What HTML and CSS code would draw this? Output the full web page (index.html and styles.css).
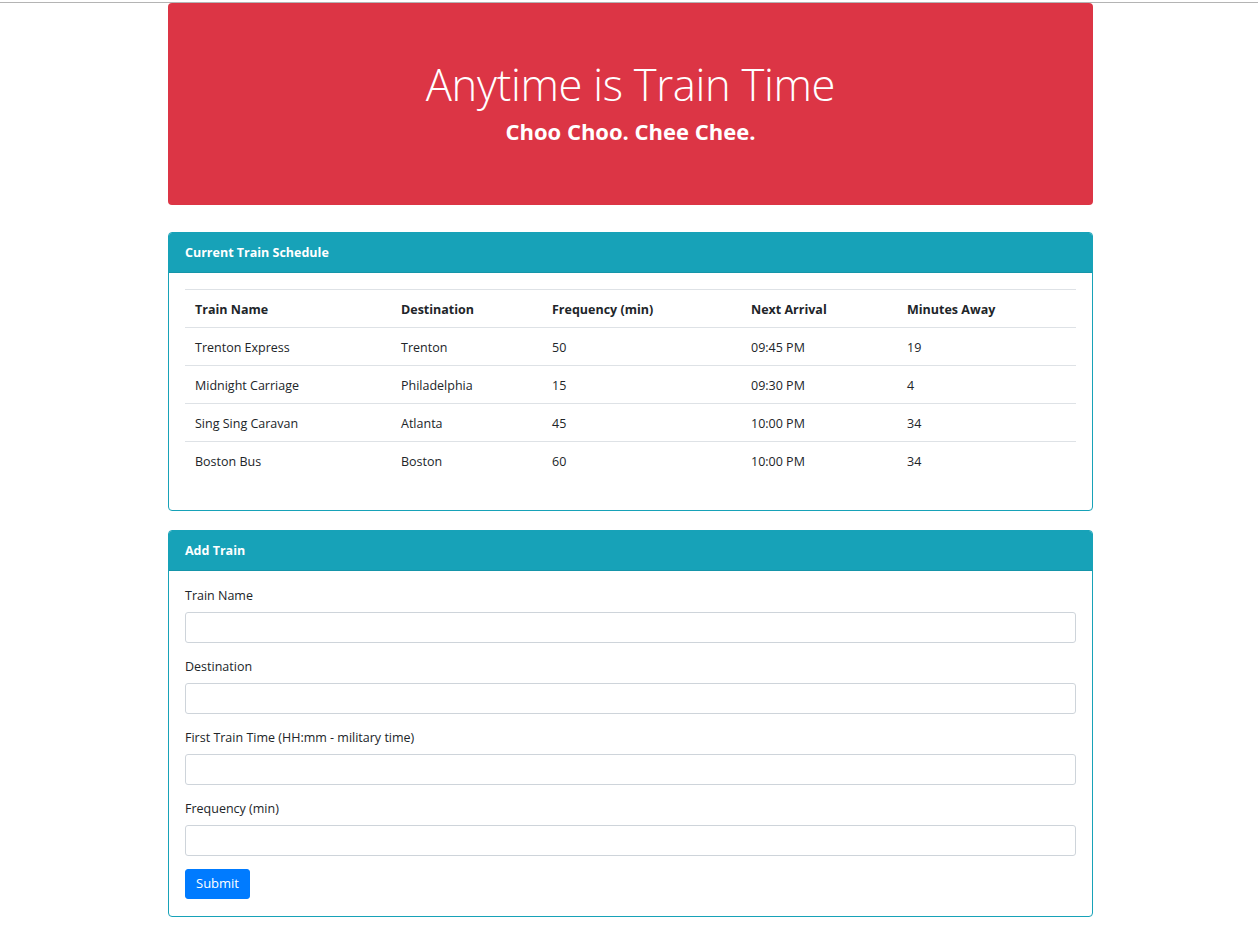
FILE: index.html
```html
<!DOCTYPE html>
<html lang="en">
<head>
<meta charset="utf-8">
<title>Train Time</title>
<link rel="stylesheet" href="styles.css">
</head>
<body>
<div class="topline"></div>
<div class="container">
  <div class="jumbotron">
    <h1 class="title">Anytime is Train Time</h1>
    <h3 class="subtitle">Choo Choo. Chee Chee.</h3>
  </div>

  <div class="card">
    <div class="card-header">Current Train Schedule</div>
    <div class="card-body">
      <table class="table">
        <thead>
          <tr>
            <th class="c1">Train Name</th>
            <th class="c2">Destination</th>
            <th class="c3">Frequency (min)</th>
            <th class="c4">Next Arrival</th>
            <th class="c5">Minutes Away</th>
          </tr>
        </thead>
        <tbody>
          <tr><td>Trenton Express</td><td>Trenton</td><td>50</td><td>09:45 PM</td><td>19</td></tr>
          <tr><td>Midnight Carriage</td><td>Philadelphia</td><td>15</td><td>09:30 PM</td><td>4</td></tr>
          <tr><td>Sing Sing Caravan</td><td>Atlanta</td><td>45</td><td>10:00 PM</td><td>34</td></tr>
          <tr><td>Boston Bus</td><td>Boston</td><td>60</td><td>10:00 PM</td><td>34</td></tr>
        </tbody>
      </table>
    </div>
  </div>

  <div class="card card-form">
    <div class="card-header">Add Train</div>
    <div class="card-body form-body">
      <form class="form">
        <div class="form-group">
          <label for="train-name">Train Name</label>
          <input id="train-name" class="form-control" type="text">
        </div>
        <div class="form-group">
          <label for="destination">Destination</label>
          <input id="destination" class="form-control" type="text">
        </div>
        <div class="form-group">
          <label for="first-time">First Train Time (HH:mm - military time)</label>
          <input id="first-time" class="form-control" type="text">
        </div>
        <div class="form-group">
          <label for="frequency">Frequency (min)</label>
          <input id="frequency" class="form-control" type="text">
        </div>
        <button type="button" class="btn">Submit</button>
      </form>
    </div>
  </div>
</div>
</body>
</html>
```

FILE: styles.css
```css
* { box-sizing: border-box; }
html, body { margin: 0; padding: 0; background: #fff; }
body {
  font-family: "Open Sans", "Noto Sans", "Liberation Sans", sans-serif;
  font-size: 12.5px;
  line-height: 1.5;
  color: #212529;
  padding-top: 2px;
}
.topline { height: 1px; background: #b4b4b4; }
.container {
  width: 925px;
  margin: 0 0 0 168px;
  padding-bottom: 26px;
}
.jumbotron {
  background: #dc3545;
  color: #fff;
  border-radius: 4px;
  text-align: center;
  padding: 54px 26px 50px;
  margin-bottom: 27px;
  height: 202px;
}
.title {
  margin: 0 0 4px;
  font-size: 43.5px;
  font-weight: 300;
  line-height: 56px;
  letter-spacing: -0.3px;
}
.subtitle {
  margin: 0;
  font-size: 22px;
  font-weight: 700;
  line-height: 29px;
}
.card {
  border: 1px solid #17a2b8;
  border-radius: 4px;
  margin-bottom: 19px;
  overflow: hidden;
}
.card-header {
  background: #17a2b8;
  color: #fff;
  font-weight: 700;
  padding: 10px 16px 9px;
  line-height: 19px;
  height: 40px;
  border-bottom: 1px solid rgba(0,0,0,0.08);
}
.card-body { padding: 16px 16px 16px; }
.form-body { padding: 15px 16px 17px; }
.table {
  width: 100%;
  border-collapse: collapse;
  margin-bottom: 15px;
}
.table th, .table td {
  text-align: left;
  padding: 9.5px 10px 8.5px;
  line-height: 19px;
  border-top: 1px solid #dee2e6;
  vertical-align: top;
}
.table th { font-weight: 700; border-bottom: 1px solid #dee2e6; }
.c1 { width: 206px; }
.c2 { width: 151px; }
.c3 { width: 199px; }
.c4 { width: 156px; }
.c5 { width: auto; }
.form-group { margin-bottom: 13px; }
label {
  display: block;
  margin-bottom: 6px;
  line-height: 20px;
  padding-top: 1px;
}
.form-group:first-child label { padding-top: 0; }
.form-control {
  display: block;
  width: 100%;
  height: 31px;
  padding: 5px 10px;
  font: inherit;
  border: 1px solid #ced4da;
  border-radius: 3px;
  background: #fff;
}
.btn {
  display: inline-block;
  font: inherit;
  font-size: 13px;
  color: #fff;
  background: #007bff;
  border: 1px solid #007bff;
  border-radius: 3px;
  padding: 4px 10px;
  height: 30px;
  line-height: 19.5px;
}
```
